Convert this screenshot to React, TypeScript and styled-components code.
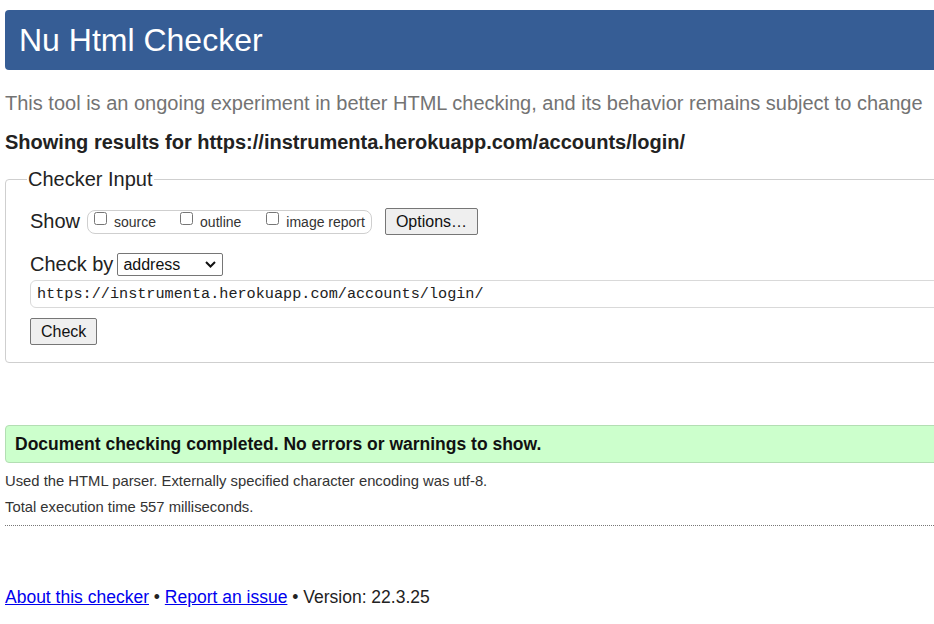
import React from "react";
import styled, { createGlobalStyle } from "styled-components";

const Global = createGlobalStyle`
  html, body { margin: 0; padding: 0; overflow: hidden; background: #fff; }
  body { font-family: "Liberation Sans", Arial, sans-serif; color: #222; }
`;

const Page = styled.div`
  width: 1100px;
  padding: 10px 0 0 0;
`;

const Header = styled.h1`
  margin: 0 0 0 5px;
  height: 60px;
  box-sizing: border-box;
  padding: 0 14px;
  display: flex;
  align-items: center;
  background: #365d95;
  color: #fff;
  border-radius: 4px;
  font-size: 32px;
  font-weight: normal;
  line-height: 1;
`;

const Intro = styled.p`
  margin: 21px 0 0 5px;
  font-size: 20px;
  line-height: 24px;
  color: #737373;
`;

const Results = styled.p`
  margin: 15px 0 0 5px;
  font-size: 20px;
  line-height: 24px;
  font-weight: bold;
  color: #222;
`;

const Fieldset = styled.fieldset`
  margin: 14px 0 0 5px;
  padding: 8px 24px 17px 24px;
  border: 1px solid #cfcfcf;
  border-radius: 4px;
`;

const Legend = styled.legend`
  font-size: 20px;
  padding: 0 1px;
  margin-left: -3px;
  color: #222;
`;

const Row = styled.div<{ $mt?: number }>`
  display: flex;
  align-items: center;
  margin-top: ${(p) => p.$mt ?? 0}px;
`;

const RowLabel = styled.span<{ $gap?: number }>`
  font-size: 20px;
  color: #222;
  margin-right: ${(p) => p.$gap ?? 5}px;
`;

const CheckGroup = styled.div`
  display: inline-flex;
  align-items: center;
  border: 1px solid #cfcfcf;
  border-radius: 8px;
  height: 24px;
  box-sizing: border-box;
  padding: 0 6px 0 6px;
  margin-right: 13px;
`;

const CheckItem = styled.label<{ $gap?: number }>`
  display: inline-flex;
  align-items: center;
  font-size: 14px;
  color: #333;
  margin-right: ${(p) => p.$gap ?? 0}px;
  input {
    margin: 0 7px 0 0;
    width: 13px;
    height: 13px;
    position: relative;
    top: -3px;
  }
`;

const Button = styled.button`
  font-family: "Liberation Sans", Arial, sans-serif;
  font-size: 16px;
  color: #111;
  background: #efefef;
  border: 1px solid #767676;
  border-radius: 2px;
  padding: 0 10px;
  height: 27px;
  line-height: 25px;
`;

const SelectWrap = styled.div`
  position: relative;
  display: inline-block;
`;

const Select = styled.select`
  appearance: none;
  -webkit-appearance: none;
  width: 106px;
  height: 23px;
  box-sizing: border-box;
  font-family: "Liberation Sans", Arial, sans-serif;
  font-size: 16px;
  color: #111;
  background: #fff;
  border: 1px solid #767676;
  border-radius: 2px;
  padding: 0 0 0 5px;
`;

const Chevron = styled.svg`
  position: absolute;
  right: 7px;
  top: 8px;
  pointer-events: none;
`;

const UrlInput = styled.input`
  display: block;
  box-sizing: border-box;
  width: 1000px;
  height: 28px;
  margin-top: 4px;
  padding: 0 6px;
  border: 1px solid #d9d9d9;
  border-radius: 6px;
  font-family: "Liberation Mono", "DejaVu Sans Mono", monospace;
  font-size: 15.2px;
  color: #222;
  background: #fff;
`;

const Notice = styled.div`
  margin: 62px 0 0 5px;
  height: 38px;
  box-sizing: border-box;
  padding: 0 9px;
  display: flex;
  align-items: center;
  background: #ccffcc;
  border: 1px solid #b3deb3;
  border-radius: 4px;
  font-size: 17.5px;
  font-weight: bold;
  color: #111;
`;

const Detail = styled.p<{ $mt: number }>`
  margin: ${(p) => p.$mt}px 0 0 5px;
  font-size: 14.8px;
  line-height: 18px;
  color: #333;
`;

const Dotted = styled.hr`
  margin: 9px 0 0 5px;
  border: 0;
  border-top: 1px dotted #777;
  height: 0;
`;

const Footer = styled.p`
  margin: 59px 0 0 5px;
  font-size: 17.5px;
  line-height: 24px;
  color: #222;
  a { color: #0000ee; text-decoration: underline; }
`;

export default function App() {
  return (
    <>
      <Global />
      <Page>
        <Header>Nu Html Checker</Header>
        <Intro>
          This tool is an ongoing experiment in better HTML checking, and its
          behavior remains subject to change
        </Intro>
        <Results>
          Showing results for https://instrumenta.herokuapp.com/accounts/login/
        </Results>
        <Fieldset>
          <Legend>Checker Input</Legend>
          <Row $mt={9}>
            <RowLabel $gap={7}>Show</RowLabel>
            <CheckGroup>
              <CheckItem $gap={24}>
                <input type="checkbox" />
                source
              </CheckItem>
              <CheckItem $gap={25}>
                <input type="checkbox" />
                outline
              </CheckItem>
              <CheckItem>
                <input type="checkbox" />
                image report
              </CheckItem>
            </CheckGroup>
            <Button>Options…</Button>
          </Row>
          <Row $mt={18}>
            <RowLabel $gap={4}>Check by</RowLabel>
            <SelectWrap>
              <Select defaultValue="address">
                <option value="address">address</option>
                <option value="file">file upload</option>
                <option value="text">text input</option>
              </Select>
              <Chevron width="11" height="7" viewBox="0 0 11 7">
                <path d="M1 1 L5.5 5.5 L10 1" fill="none" stroke="#111" strokeWidth="2" />
              </Chevron>
            </SelectWrap>
          </Row>
          <UrlInput readOnly value="https://instrumenta.herokuapp.com/accounts/login/" />
          <Row $mt={10}>
            <Button>Check</Button>
          </Row>
        </Fieldset>
        <Notice>Document checking completed. No errors or warnings to show.</Notice>
        <Detail $mt={9}>
          Used the HTML parser. Externally specified character encoding was utf-8.
        </Detail>
        <Detail $mt={8}>Total execution time 557 milliseconds.</Detail>
        <Dotted />
        <Footer>
          <a href="#about">About this checker</a> • <a href="#issue">Report an issue</a> •
          Version: 22.3.25
        </Footer>
      </Page>
    </>
  );
}
